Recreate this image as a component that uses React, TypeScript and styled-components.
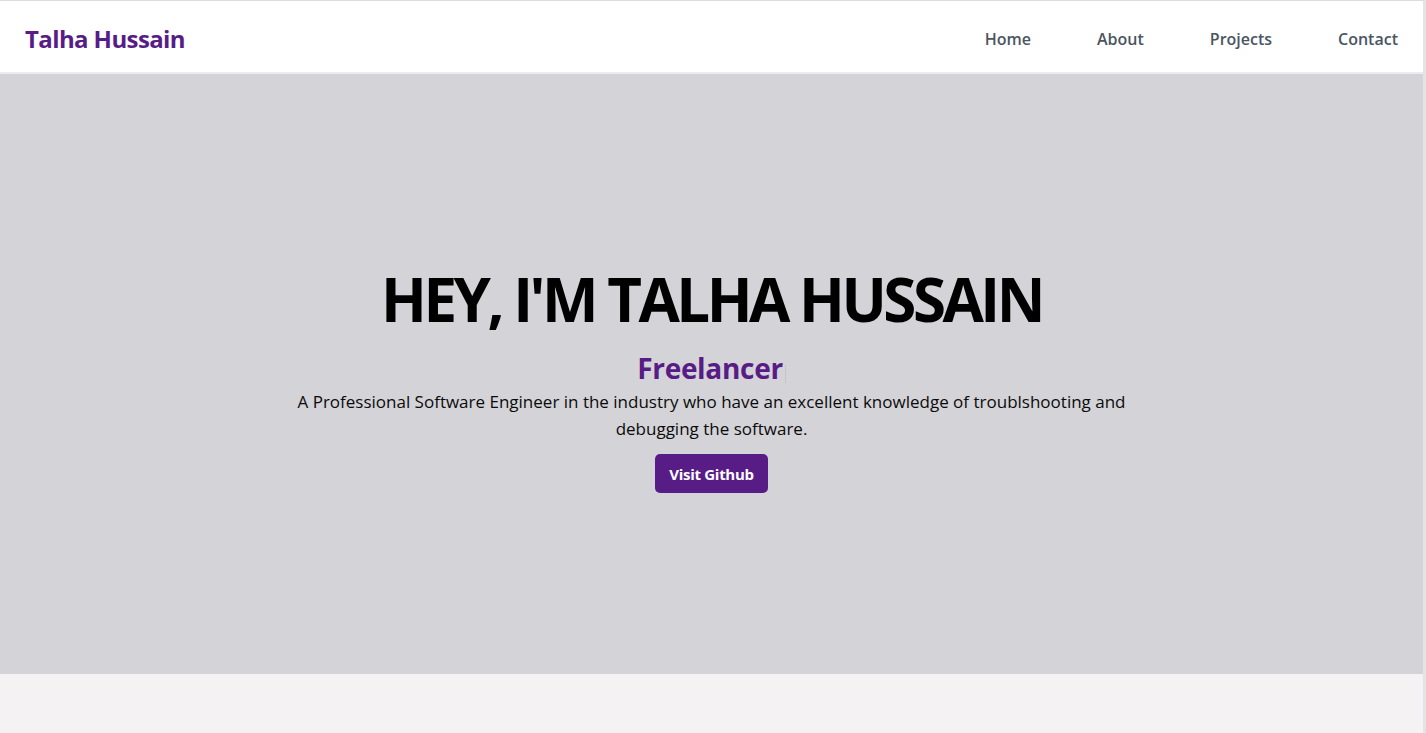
import styled, { createGlobalStyle } from 'styled-components';

const GlobalStyle = createGlobalStyle`
  html, body {
    margin: 0;
    padding: 0;
    background: #f4f2f3;
    font-family: 'Open Sans', 'Noto Sans', sans-serif;
  }

  * {
    box-sizing: border-box;
  }
`;

const StyledPage = styled.div`
  min-height: 733px;
  border-top: 1px solid #dcdcdc;
  border-right: 3px solid #e4e4e6;
  background: #f4f2f3;
`;

const StyledNavbar = styled.header`
  height: 73px;
  display: flex;
  align-items: center;
  justify-content: space-between;
  padding: 4px 25px 0;
  background: #ffffff;
  border-bottom: 2px solid #e9ecf1;
`;

const StyledLogo = styled.a`
  color: #581c87;
  font-size: 24px;
  font-weight: 700;
  text-decoration: none;
  letter-spacing: -0.6px;
`;

const StyledNavList = styled.nav`
  display: flex;
  gap: 66px;
`;

const StyledNavLink = styled.a`
  color: #4b5563;
  font-size: 16px;
  font-weight: 600;
  text-decoration: none;
`;

const StyledHero = styled.section`
  height: 600px;
  background: #d4d3d8;
  display: flex;
  flex-direction: column;
  align-items: center;
  justify-content: center;
  text-align: center;
  padding-top: 8px;
`;

const StyledHeading = styled.h1`
  margin: 0;
  font-size: 60px;
  font-weight: 700;
  line-height: 1.2;
  color: #000000;
  letter-spacing: -3.5px;
`;

const StyledRole = styled.h2`
  margin: 15px 0 0;
  font-size: 28px;
  font-weight: 700;
  line-height: 1.3;
  color: #581c87;
  letter-spacing: -0.3px;

  &::after {
    content: '';
    display: inline-block;
    width: 1px;
    height: 18px;
    margin-left: 2px;
    vertical-align: -4px;
    background: #c4c4c8;
  }
`;

const StyledParagraph = styled.p`
  margin: 2px 0 0;
  max-width: 860px;
  font-size: 17px;
  line-height: 27px;
  color: #0b0b0b;
`;

const StyledButton = styled.a`
  margin-top: 12px;
  display: inline-flex;
  align-items: center;
  justify-content: center;
  width: 113px;
  height: 39px;
  border-radius: 5px;
  background: #581c87;
  color: #ffffff;
  font-size: 15px;
  font-weight: 700;
  text-decoration: none;
  letter-spacing: -0.3px;
`;

const navItems = ['Home', 'About', 'Projects', 'Contact'];

const App = () => (
  <>
    <GlobalStyle />
    <StyledPage>
      <StyledNavbar>
        <StyledLogo href="#home">Talha Hussain</StyledLogo>
        <StyledNavList>
          {navItems.map((item) => (
            <StyledNavLink key={item} href={`#${item.toLowerCase()}`}>
              {item}
            </StyledNavLink>
          ))}
        </StyledNavList>
      </StyledNavbar>
      <StyledHero id="home">
        <StyledHeading>HEY, I'M TALHA HUSSAIN</StyledHeading>
        <StyledRole>Freelancer</StyledRole>
        <StyledParagraph>
          A Professional Software Engineer in the industry who have an excellent knowledge of
          troublshooting and debugging the software.
        </StyledParagraph>
        <StyledButton href="#github">Visit Github</StyledButton>
      </StyledHero>
    </StyledPage>
  </>
);

export default App;
